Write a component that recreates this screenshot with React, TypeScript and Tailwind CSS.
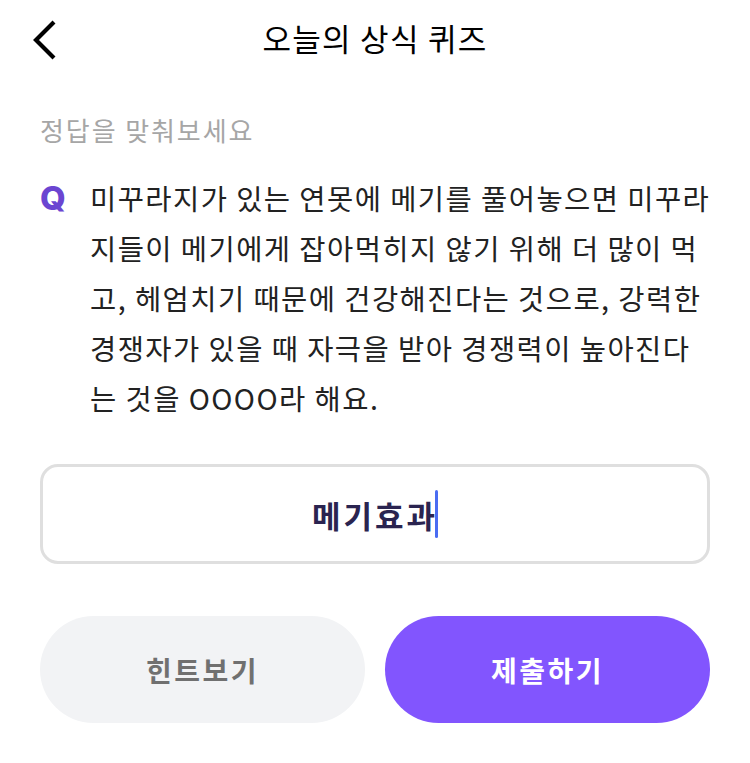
import { useState } from 'react';

const FONT = "font-['Noto_Sans_CJK_KR','Noto_Sans',sans-serif]";

const lines = [
  '미꾸라지가 있는 연못에 메기를 풀어놓으면 미꾸라',
  '지들이 메기에게 잡아먹히지 않기 위해 더 많이 먹',
  '고, 헤엄치기 때문에 건강해진다는 것으로, 강력한',
  '경쟁자가 있을 때 자극을 받아 경쟁력이 높아진다',
  '는 것을 OOOO라 해요.',
];

export default function App() {
  const [answer] = useState('메기효과');

  return (
    <div className={`w-[750px] h-[763px] bg-white ${FONT} text-[#1c1c1c]`}>
      {/* Header */}
      <header className="grid grid-cols-[80px_1fr_80px] items-center h-20">
        <button className="flex items-center justify-start pl-[31px] h-full">
          <svg width="28" height="40" viewBox="0 0 28 40" fill="none">
            <path d="M23 2 L5 20 L23 38" stroke="#000" strokeWidth="4.2" />
          </svg>
        </button>
        <h1 className="-mt-[3px] text-center text-[31px] font-normal text-black tracking-[1.3px]">오늘의 상식 퀴즈</h1>
        <div />
      </header>

      <main className="px-10">
        <p className="mt-[32px] text-[26px] leading-[36px] text-[#a6a6a6] tracking-[1.9px]">정답을 맞춰보세요</p>

        {/* Question */}
        <div className="flex mt-[25px]">
          <span className="w-[50px] shrink-0 text-[33px] leading-[50px] font-extrabold text-[#6b45d1] font-['Inter',sans-serif]">Q</span>
          <p className="flex-1 text-[28.5px] leading-[50px] text-[#222] tracking-[1.45px]">
            {lines.map((l) => (
              <span key={l} className="block whitespace-nowrap">{l}</span>
            ))}
          </p>
        </div>

        {/* Answer input */}
        <div className="mt-[41px] h-[100px] rounded-[18px] border-[3px] border-[#dfdfdf] flex items-center justify-center">
          <span className="text-[31px] font-bold text-[#2a2450] leading-none tracking-[3px] -mr-[3px]">{answer}</span>
          <span className="w-[3px] h-[48px] rounded-full bg-[#4a6cf2]" />
        </div>

        {/* Buttons */}
        <div className="mt-[52px] grid grid-cols-2 gap-5">
          <button className="h-[107px] rounded-full bg-[#f2f3f5] text-[28px] font-semibold text-[#707070] tracking-[2.5px]">힌트보기</button>
          <button className="h-[107px] rounded-full bg-[#8255fe] text-[28px] font-semibold text-white tracking-[2.5px]">제출하기</button>
        </div>
      </main>
    </div>
  );
}
